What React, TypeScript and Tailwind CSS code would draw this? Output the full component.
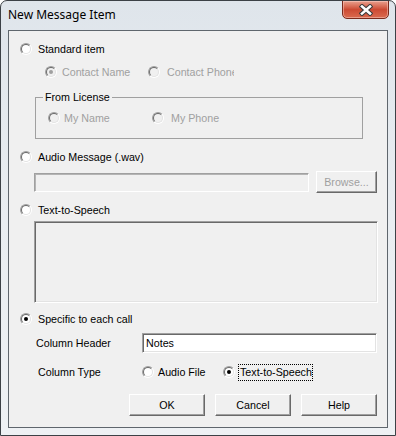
import React from "react";

const sans = "font-['Liberation_Sans',Arial,sans-serif]";

const Radio: React.FC<{ checked?: boolean; disabled?: boolean }> = ({ checked, disabled }) => (
  <span className="inline-block w-[12px] h-[12px] shrink-0 rounded-full border border-t-[#a0a0a0] border-l-[#a0a0a0] border-b-white border-r-white">
    <span
      className={`flex w-full h-full items-center justify-center rounded-full border border-t-[#696969] border-l-[#696969] border-b-[#e3e3e3] border-r-[#e3e3e3] ${
        disabled ? "bg-[#f0f0f0]" : "bg-white"
      }`}
    >
      {checked && <span className={`w-[4px] h-[4px] rounded-full ${disabled ? "bg-[#a0a0a0]" : "bg-black"}`} />}
    </span>
  </span>
);

const Button: React.FC<{ label: string; disabled?: boolean; className?: string }> = ({ label, disabled, className }) => (
  <div
    className={`flex items-center justify-center h-[22px] bg-[#f0f0f0] border border-t-white border-l-white border-b-[#696969] border-r-[#696969] shadow-[inset_-1px_-1px_0_#a0a0a0] ${
      disabled ? "text-[#a0a0a0]" : "text-black"
    } ${className ?? ""}`}
  >
    {label}
  </div>
);

const CloseButton: React.FC = () => (
  <div className="flex items-center justify-center w-[47px] h-[19px] -mt-px rounded-b-[5px] border border-[#7a2a1c] bg-gradient-to-b from-[#e8a08e] via-[#cc4a33] to-[#da6a4f] shadow-[inset_0_0_0_1px_rgba(255,220,210,0.45)]">
    <svg width="14" height="12" viewBox="0 0 14 12">
      <path d="M3 2.5 L11 9.5 M11 2.5 L3 9.5" stroke="#3b3b3b" strokeWidth="4.6" strokeLinecap="square" />
      <path d="M3 2.5 L11 9.5 M11 2.5 L3 9.5" stroke="#ffffff" strokeWidth="2.6" strokeLinecap="square" />
    </svg>
  </div>
);

export default function App() {
  return (
    <div className="w-[396px] h-[436px] flex flex-col rounded-t-[7px] border border-[#3c4146] bg-gradient-to-b from-[#dfe5eb] via-[#e9edf1] to-[#eef1f4] overflow-hidden">
      {/* Title bar */}
      <div className="h-[29px] flex items-start justify-between pl-[7px] pr-[6px]">
        <span className="mt-[6px] text-[12px] leading-[16px] text-black font-['Noto_Sans',sans-serif]">New Message Item</span>
        <CloseButton />
      </div>

      {/* Client area */}
      <div className={`mx-[7px] mb-[7px] flex-1 flex flex-col border border-[#5f666d] bg-[#f0f0f0] text-[10.7px] leading-[14px] text-black ${sans}`}>
        <div className="mt-[11px] h-[14px] flex items-center pl-[11px] gap-[6px]">
          <Radio />
          <span>Standard item</span>
        </div>

        <div className="mt-[9px] h-[14px] flex items-center pl-[36px] text-[#a0a0a0]">
          <div className="w-[103px] flex items-center gap-[5px]">
            <Radio checked disabled />
            <span>Contact Name</span>
          </div>
          <div className="flex items-center gap-[7px]">
            <Radio disabled />
            <span className="w-[67px] overflow-hidden whitespace-nowrap">Contact Phone</span>
          </div>
        </div>

        <fieldset className="mt-[11px] ml-[26px] w-[328px] border border-[#a0a0a0]">
          <legend className="ml-[7px] px-[2px] leading-[14px]">From License</legend>
          <div className="mt-[7px] mb-[13px] h-[14px] flex items-center pl-[12px] text-[#a0a0a0]">
            <div className="w-[104px] flex items-center gap-[4px]">
              <Radio disabled />
              <span>My Name</span>
            </div>
            <div className="flex items-center gap-[7px]">
              <Radio disabled />
              <span>My Phone</span>
            </div>
          </div>
        </fieldset>

        <div className="mt-[11px] h-[14px] flex items-center pl-[11px] gap-[6px]">
          <Radio />
          <span>Audio Message (.wav)</span>
        </div>

        <div className="mt-[7px] h-[22px] flex items-center pl-[25px]">
          <div className="w-[275px] h-[19px] bg-[#f0f0f0] border border-t-[#a0a0a0] border-l-[#a0a0a0] border-b-white border-r-white shadow-[inset_1px_1px_0_#b4b4b4]" />
          <Button label="Browse..." disabled className="ml-[7px] w-[61px]" />
        </div>

        <div className="mt-[10px] h-[14px] flex items-center pl-[11px] gap-[6px]">
          <Radio />
          <span>Text-to-Speech</span>
        </div>

        <div className="mt-[4px] ml-[25px] w-[344px] h-[82px] bg-[#f0f0f0] border border-t-[#a0a0a0] border-l-[#a0a0a0] border-b-white border-r-white shadow-[inset_1px_1px_0_#696969,inset_-1px_-1px_0_#e3e3e3]" />

        <div className="mt-[9px] h-[14px] flex items-center pl-[11px] gap-[6px]">
          <Radio checked />
          <span>Specific to each call</span>
        </div>

        <div className="mt-[7px] h-[20px] flex items-center pl-[27px]">
          <span className="w-[106px]">Column Header</span>
          <div className="w-[235px] h-[20px] flex items-center pl-[3px] bg-white border border-t-[#a0a0a0] border-l-[#a0a0a0] border-b-white border-r-white shadow-[inset_1px_1px_0_#696969,inset_-1px_-1px_0_#e3e3e3]">
            Notes
          </div>
        </div>

        <div className="mt-[10px] h-[18px] flex items-center pl-[29px]">
          <span className="w-[104px]">Column Type</span>
          <div className="w-[81px] flex items-center gap-[4px]">
            <Radio />
            <span>Audio File</span>
          </div>
          <div className="flex items-center gap-[3px]">
            <Radio checked />
            <span className="w-[75px] h-[17px] flex items-center pl-px border border-dotted border-black">Text-to-Speech</span>
          </div>
        </div>

        <div className="mt-[13px] flex justify-end gap-[10px] pr-[10px]">
          <Button label="OK" className="w-[76px]" />
          <Button label="Cancel" className="w-[76px]" />
          <Button label="Help" className="w-[76px]" />
        </div>
      </div>
    </div>
  );
}
